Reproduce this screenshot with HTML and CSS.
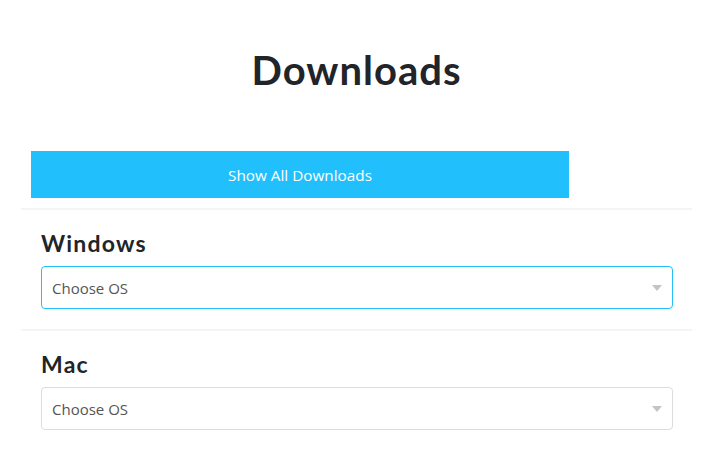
FILE: index.html
```html
<!DOCTYPE html>
<html lang="en">
<head>
    <meta charset="UTF-8">
    <meta name="viewport" content="width=device-width, initial-scale=1.0">
    <title>Downloads</title>
    <link rel="stylesheet" href="styles.css">
</head>
<body>
    <div class="page">
        <h1 class="title">Downloads</h1>
        <div class="button-row">
            <button class="show-all">Show All Downloads</button>
        </div>

        <div class="os-section">
            <h2>Windows</h2>
            <div class="select-wrap">
                <select class="os-select focused">
                    <option>Choose OS</option>
                </select>
            </div>
        </div>

        <div class="os-section">
            <h2>Mac</h2>
            <div class="select-wrap">
                <select class="os-select">
                    <option>Choose OS</option>
                </select>
            </div>
        </div>
    </div>
</body>
</html>
```

FILE: styles.css
```css
body {
    margin: 0;
    background-color: #ffffff;
    font-family: "Open Sans", "Noto Sans", sans-serif;
    color: #212529;
}

.page {
    padding: 0 34px 0 21px;
}

.title {
    margin: 0 0 58px;
    padding-top: 47px;
    text-align: center;
    font-family: Lato, sans-serif;
    font-weight: 700;
    font-size: 40px;
    line-height: 46px;
    letter-spacing: 1px;
    color: #212529;
}

.button-row {
    padding: 0 123px 10px 10px;
    border-bottom: 2px solid #f4f4f4;
}

.show-all {
    display: block;
    width: 100%;
    height: 47px;
    border: none;
    background-color: #21bffc;
    color: #ffffff;
    font-family: "Open Sans", sans-serif;
    font-size: 15.3px;
    cursor: pointer;
}

.os-section {
    padding: 20px 19px 20px 20px;
    border-bottom: 2px solid #f4f4f4;
}

.os-section:last-child {
    border-bottom: none;
}

.os-section h2 {
    margin: 0 0 10px;
    font-family: Lato, sans-serif;
    font-weight: 700;
    font-size: 23px;
    line-height: 26px;
    letter-spacing: 1.2px;
    color: #212529;
}

.select-wrap {
    position: relative;
}

.select-wrap:after {
    content: "";
    position: absolute;
    right: 11px;
    top: 19px;
    border-left: 5px solid transparent;
    border-right: 5px solid transparent;
    border-top: 6px solid #c4c4c4;
    pointer-events: none;
}

.os-select {
    display: block;
    width: 100%;
    height: 43px;
    padding: 0 10px;
    border: 1px solid #dddddd;
    border-radius: 4px;
    background: #ffffff;
    font-family: "Open Sans", sans-serif;
    font-size: 15px;
    color: #555555;
    appearance: none;
    -webkit-appearance: none;
}

.os-select.focused {
    border-color: #21bffc;
}
```
